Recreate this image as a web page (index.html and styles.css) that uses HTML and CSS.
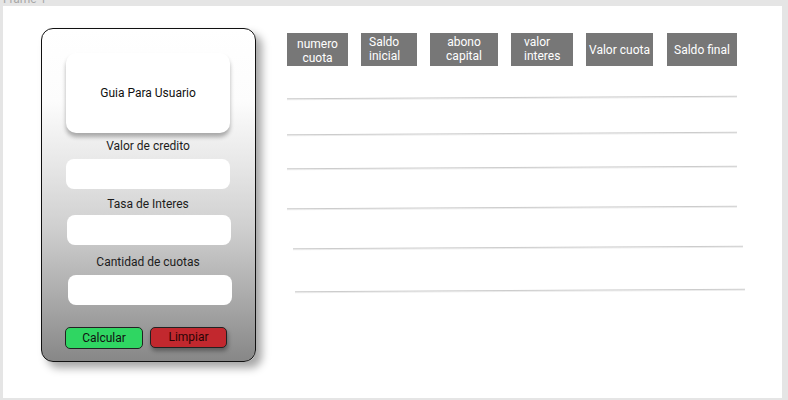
FILE: index.html
```html
<!DOCTYPE html>
<html lang="es">
<head>
<meta charset="utf-8">
<title>Frame 1</title>
<link rel="stylesheet" href="styles.css">
</head>
<body>
<div class="frame-label"><span>Frame 1</span></div>
<div class="frame">
  <div class="card">
    <div class="guide">Guia Para Usuario</div>
    <div class="label lb1">Valor de credito</div>
    <div class="input in1"></div>
    <div class="label lb2">Tasa de Interes</div>
    <div class="input in2"></div>
    <div class="label lb3">Cantidad de cuotas</div>
    <div class="input in3"></div>
    <div class="buttons">
      <div class="btn calc">Calcular</div>
      <div class="btn clear">Limpiar</div>
    </div>
  </div>
  <div class="table">
    <div class="heads">
      <div class="th w1">numero<br>cuota</div>
      <div class="th w2 left">Saldo<br>inicial</div>
      <div class="th w3">abono<br>capital</div>
      <div class="th w4 left2">valor<br>interes</div>
      <div class="th w5">Valor cuota</div>
      <div class="th w6">Saldo final</div>
    </div>
    <div class="line l1"></div>
    <div class="line l2"></div>
    <div class="line l3"></div>
    <div class="line l4"></div>
    <div class="line l5"></div>
    <div class="line l6"></div>
  </div>
</div>
</body>
</html>
```

FILE: styles.css
```css
html, body {
  margin: 0;
  padding: 0;
}
body {
  background: #e5e5e5;
  font-family: Roboto, "Liberation Sans", sans-serif;
  width: 788px;
  height: 400px;
  overflow: hidden;
}
.frame-label {
  height: 6px;
  overflow: hidden;
  padding-left: 3px;
}
.frame-label span {
  display: block;
  margin-top: -8px;
  font-size: 12px;
  line-height: 14px;
  color: #a8a8a8;
}
.frame {
  margin-left: 3px;
  width: 779px;
  height: 392px;
  background: #fff;
  display: flex;
  align-items: flex-start;
  box-sizing: border-box;
  padding: 22px 0 0 38px;
}
.card {
  width: 215px;
  height: 334px;
  box-sizing: border-box;
  border: 1px solid #111;
  border-radius: 12px;
  background: linear-gradient(#ffffff 0%, #fcfcfc 22%, #e8e8e8 40%, #cfcfcf 60%, #acacac 80%, #878787 100%);
  box-shadow: 6px 6px 8px rgba(0, 0, 0, 0.35);
  padding: 24px 0 0 24px;
  display: flex;
  flex-direction: column;
}
.guide {
  width: 164px;
  height: 80px;
  background: #fff;
  border-radius: 10px;
  box-shadow: 0 4px 4px rgba(0, 0, 0, 0.3);
  display: flex;
  align-items: center;
  justify-content: center;
  font-size: 12px;
  color: #111;
}
.label {
  width: 164px;
  text-align: center;
  font-size: 12px;
  line-height: 14px;
  height: 14px;
  color: #1c1c1c;
}
.input {
  width: 164px;
  height: 30px;
  background: #fff;
  border-radius: 8px;
}
.lb1 { margin-top: 6px; }
.in1 { margin-top: 6px; }
.lb2 { margin-top: 8px; }
.in2 { margin-top: 4px; margin-left: 1px; }
.lb3 { margin-top: 10px; }
.in3 { margin-top: 6px; margin-left: 2px; }
.buttons {
  display: flex;
  gap: 7px;
  margin-top: 22px;
  margin-left: -1px;
}
.btn {
  width: 78px;
  height: 22px;
  box-sizing: border-box;
  border: 1px solid #222;
  border-radius: 5px;
  font-size: 12px;
  line-height: 20px;
  text-align: center;
  color: #111;
}
.calc {
  background: #2fd662;
}
.clear {
  width: 77px;
  height: 21px;
  line-height: 19px;
  background: #c2282e;
  color: #2a0505;
  box-shadow: 1px 3px 4px rgba(0, 0, 0, 0.35);
}
.table {
  margin-left: 31px;
  margin-top: 5px;
  display: flex;
  flex-direction: column;
}
.heads {
  display: flex;
  gap: 13px;
}
.th {
  box-sizing: border-box;
  height: 33px;
  background: #777777;
  color: #fff;
  font-size: 12px;
  line-height: 14px;
  display: flex;
  align-items: center;
  justify-content: center;
  text-align: center;
}
.th.left {
  justify-content: flex-start;
  text-align: left;
  padding-left: 8px;
  align-items: flex-start;
  padding-top: 2px;
}
.th.left2 {
  justify-content: flex-start;
  text-align: left;
  padding-left: 13px;
  align-items: flex-start;
  padding-top: 2px;
}
.w1 { width: 61px; padding-top: 2px; }
.w2 { width: 56px; }
.w3 { width: 68px; padding-bottom: 1px; }
.w4 { width: 62px; }
.w5 { width: 67px; }
.w6 { width: 70px; margin-left: 1px; }
.line {
  width: 450px;
  height: 1px;
  background: #cccccc;
  box-shadow: 0 1px 0 #ececec;
  transform: rotate(-0.3deg);
}
.l1 { margin-top: 31px; }
.l2 { margin-top: 35px; }
.l3 { margin-top: 33px; }
.l4 { margin-top: 39px; }
.l5 { margin-top: 39px; margin-left: 6px; }
.l6 { margin-top: 42px; margin-left: 8px; }
```
